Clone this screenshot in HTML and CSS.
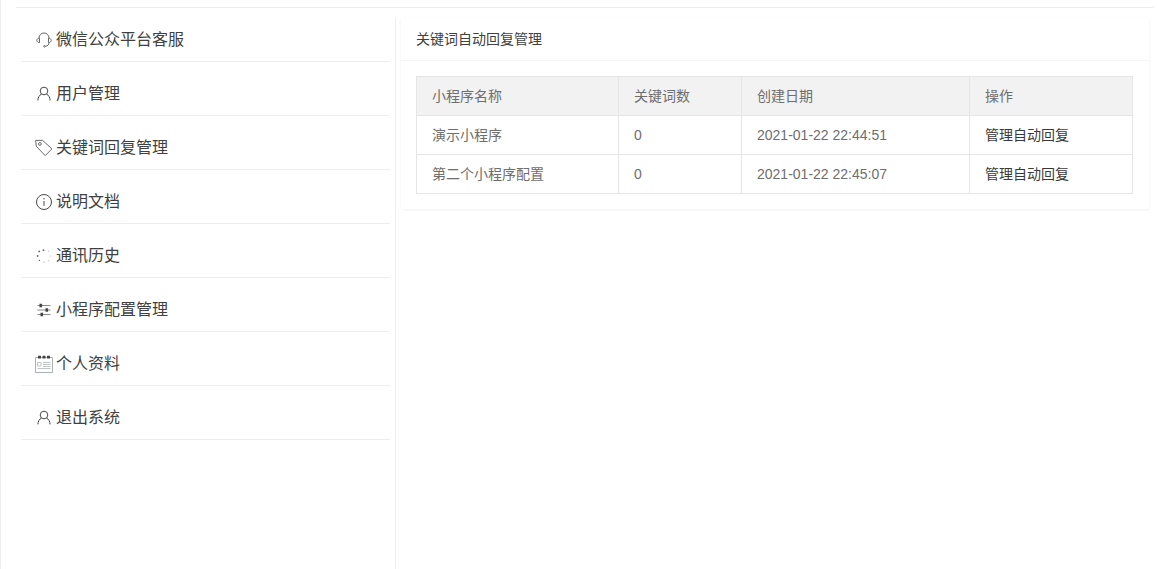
FILE: index.html
```html
<!DOCTYPE html>
<html lang="zh-CN">
<head>
<meta charset="utf-8">
<title>关键词自动回复管理</title>
<link rel="stylesheet" href="styles.css">
</head>
<body>
<div class="app">
  <div class="topline"></div>
  <div class="layout">
    <nav class="sidebar">
      <a class="nav-item"><svg class="icon icon-soft" viewBox="0 0 16 16"><path d="M3 6.500V6a5 5 0 0 1 10 0v.5"/><path d="M3.500 6.200C1.800 6.300.8 7.200.8 8.400s1 2.100 2.700 2.200zM12.500 6.200c1.700.1 2.700 1 2.700 2.200s-1 2.100-2.700 2.200z"/><path d="M12.900 10.800c0 2-1.400 3.300-3.500 3.500"/><circle cx="8.500" cy="14.300" r=".8"/></svg><span>微信公众平台客服</span></a>
      <a class="nav-item"><svg class="icon" viewBox="0 0 16 16"><circle cx="8" cy="5" r="3.800"/><path d="M5.400 8.100C3.300 9.200 2 11.400 1.900 14.400M10.600 8.100c2.100 1.100 3.400 3.300 3.500 6.300"/></svg><span>用户管理</span></a>
      <a class="nav-item"><svg class="icon icon-soft" viewBox="0 0 16 16"><path d="M-.3.400.2 6.200 9.200 15.600 15.900 8.900 6.600.400z"/><circle cx="3.900" cy="3.900" r="1.400"/></svg><span>关键词回复管理</span></a>
      <a class="nav-item"><svg class="icon" viewBox="0 0 16 16"><circle cx="8" cy="8" r="7.500"/><path d="M8 7v4.800"/><path d="M8 4v1.400"/></svg><span>说明文档</span></a>
      <a class="nav-item"><svg class="icon icon-dots" viewBox="0 0 16 16"><circle cx="7.500" cy="2.200" r=".9"/><circle cx="3.200" cy="3.400" r=".9"/><circle cx="1.600" cy="8" r=".9"/><circle cx="3.400" cy="12.400" r=".7"/><circle cx="8" cy="14" r=".5"/><circle cx="12.400" cy="12.600" r=".4"/><circle cx="14.200" cy="8" r=".4"/><circle cx="12.400" cy="3.600" r=".4"/></svg><span>通讯历史</span></a>
      <a class="nav-item"><svg class="icon" viewBox="0 0 16 16"><path class="bar" d="M1.500 3.500h13M1.500 8h13M1.500 12.500h13"/><path class="solid" d="M3.500 1.800h2.600v3.400H3.500zM9.500 6.300h2.600v3.400H9.500zM4.500 10.800h2.600v3.400H4.500z"/></svg><span>小程序配置管理</span></a>
      <a class="nav-item"><svg class="icon" viewBox="0 0 16 16"><path class="pale" d="M-.5 1.500h17v15h-17z"/><path class="solid" d="M2 -.3h3v2.800H2zM6.500 -.3h3v2.800h-3zM11 -.3h3v2.800h-3z"/><path class="paler" d="M1.500 6.500h3.500v3.500H1.500zM7 6.500h7.500M7 8.500h7.500M7 10.500h7.500M1.500 12.500h13"/></svg><span>个人资料</span></a>
      <a class="nav-item"><svg class="icon" viewBox="0 0 16 16"><circle cx="8" cy="5" r="3.800"/><path d="M5.400 8.100C3.300 9.200 2 11.400 1.900 14.400M10.600 8.100c2.100 1.100 3.400 3.300 3.500 6.300"/></svg><span>退出系统</span></a>
    </nav>
    <main class="content">
      <section class="card">
        <header class="card-header">关键词自动回复管理</header>
        <div class="card-body">
          <table class="data-table">
            <thead>
              <tr>
                <th class="col-name">小程序名称</th>
                <th class="col-count">关键词数</th>
                <th class="col-date">创建日期</th>
                <th class="col-action">操作</th>
              </tr>
            </thead>
            <tbody>
              <tr>
                <td>演示小程序</td>
                <td>0</td>
                <td>2021-01-22 22:44:51</td>
                <td><a class="action-link">管理自动回复</a></td>
              </tr>
              <tr>
                <td>第二个小程序配置</td>
                <td>0</td>
                <td>2021-01-22 22:45:07</td>
                <td><a class="action-link">管理自动回复</a></td>
              </tr>
            </tbody>
          </table>
        </div>
      </section>
    </main>
  </div>
</div>
</body>
</html>
```
FILE: styles.css
```css
* { box-sizing: border-box; }
html, body { margin: 0; padding: 0; height: 100%; overflow: hidden; background: #fff; }
body {
  font-family: "Liberation Sans", "Noto Sans CJK SC", sans-serif;
  font-size: 14px;
  color: #6e6e6e;
}
.app {
  height: 569px;
  border-left: 1px solid #eee;
  display: flex;
  flex-direction: column;
}
.topline {
  height: 8px;
  flex: none;
  margin-left: 15px;
  margin-right: 3px;
  border-bottom: 1px solid #eee;
}
.layout { flex: 1; display: flex; min-height: 0; }
.sidebar { width: 390px; flex: none; padding: 0 1px 0 20px; }
.nav-item {
  display: flex;
  align-items: center;
  height: 54px;
  padding: 20px 0 9px 15px;
  border-bottom: 1px solid #eee;
  font-size: 16px;
  line-height: 24px;
  color: #404040;
}
.icon {
  width: 16px;
  height: 16px;
  flex: none;
  margin-right: 4px;
  overflow: visible;
  fill: none;
  stroke: #4a4a4a;
  stroke-width: 1;
}
.icon-soft { stroke: #666; }
.icon .solid { fill: #444; stroke: none; }
.icon .bar { stroke: #888; }
.icon .pale { stroke: #a8b2b0; }
.icon .paler { stroke: #c0c6c5; }
.icon-dots { fill: #666; stroke: none; }
.content {
  flex: 1;
  margin: 10px 0 0 4px;
  padding-left: 5px;
  border-left: 1px solid #eee;
}
.card {
  width: 748px;
  background: #fff;
  border-radius: 2px;
  box-shadow: 0 1px 3px 0 rgba(0, 0, 0, .06);
}
.card-header {
  height: 43px;
  line-height: 43px;
  padding: 0 15px;
  border-bottom: 1px solid #f6f6f6;
  color: #404040;
}
.card-body { padding: 15px; }
.data-table {
  width: 717px;
  table-layout: fixed;
  border-collapse: collapse;
}
.data-table th, .data-table td {
  height: 39px;
  padding: 9px 15px;
  line-height: 20px;
  text-align: left;
  font-weight: 400;
  border: 1px solid #e6e6e6;
}
.data-table th { background: #f2f2f2; }
.col-name { width: 202px; }
.col-count { width: 123px; }
.col-date { width: 228px; }
.action-link { color: #3a3a3a; }
```
